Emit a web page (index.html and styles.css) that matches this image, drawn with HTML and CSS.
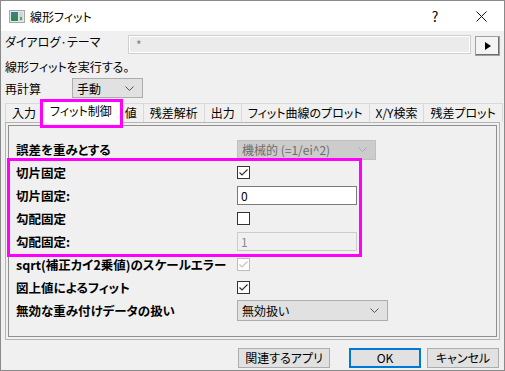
FILE: index.html
```html
<!DOCTYPE html>
<html lang="ja">
<head>
    <meta charset="UTF-8">
    <title>線形フィット</title>
    <link rel="stylesheet" href="styles.css">
</head>
<body>
    <div class="window">
        <div class="titlebar">
            <svg class="app-icon" width="16" height="13" viewBox="0 0 16 13">
                <defs>
                    <linearGradient id="ig" x1="0" y1="0" x2="0" y2="1">
                        <stop offset="0" stop-color="#3d7f86"/>
                        <stop offset="1" stop-color="#2f8a4e"/>
                    </linearGradient>
                </defs>
                <rect x="0.5" y="0.5" width="15" height="12" fill="#e6e8e8" stroke="#a4a8a8"/>
                <rect x="2" y="2" width="7" height="9" fill="url(#ig)"/>
                <rect x="10" y="2" width="4" height="9" fill="#cfd8d4"/>
                <rect x="11" y="7" width="2" height="3" fill="#5aa06a"/>
            </svg>
            <span class="title">線形フィット</span>
            <span class="cap-btn">?</span>
            <span class="cap-btn">
                <svg width="11" height="11" viewBox="0 0 11 11"><path d="M0.5 0.5 L10.5 10.5 M10.5 0.5 L0.5 10.5" stroke="#111" stroke-width="1"/></svg>
            </span>
        </div>
        <div class="body">
            <div class="theme-row">
                <span class="theme-label">ダイアログ·テーマ</span>
                <div class="theme-box">*</div>
                <div class="arrow-btn">
                    <svg width="6" height="8" viewBox="0 0 6 8"><polygon points="0,0 6,4 0,8" fill="#000"/></svg>
                </div>
            </div>
            <div class="desc">線形フィットを実行する。</div>
            <div class="recalc-row">
                <span class="recalc-label">再計算</span>
                <div class="combo recalc-combo">
                    <span>手動</span>
                    <svg class="chev" width="9" height="5" viewBox="0 0 9 5"><polyline points="0.5,0.5 4.5,4.5 8.5,0.5" fill="none" stroke="#555"/></svg>
                </div>
            </div>
            <div class="tabs">
                <div class="tab first">入力</div>
                <div class="tab active">フィット制御</div>
                <div class="tab">値</div>
                <div class="tab">残差解析</div>
                <div class="tab">出力</div>
                <div class="tab">フィット曲線のプロット</div>
                <div class="tab">X/Y検索</div>
                <div class="tab">残差プロット</div>
            </div>
            <div class="panel">
                <div class="page">
                    <div class="row">
                        <span class="lbl">誤差を重みとする</span>
                        <div class="combo combo-off weight-combo">
                            <span>機械的 (=1/ei^2)</span>
                            <svg class="chev" width="9" height="5" viewBox="0 0 9 5"><polyline points="0.5,0.5 4.5,4.5 8.5,0.5" fill="none" stroke="#aaa"/></svg>
                        </div>
                    </div>
                    <div class="marked">
                        <div class="row">
                            <span class="lbl">切片固定</span>
                            <span class="check">
                                <svg width="11" height="11" viewBox="0 0 11 11"><polyline points="1.5,5.5 4,8 9.5,2.5" fill="none" stroke="#333" stroke-width="1.2"/></svg>
                            </span>
                        </div>
                        <div class="row">
                            <span class="lbl">切片固定:</span>
                            <div class="field">0</div>
                        </div>
                        <div class="row">
                            <span class="lbl">勾配固定</span>
                            <span class="check"></span>
                        </div>
                        <div class="row">
                            <span class="lbl">勾配固定:</span>
                            <div class="field field-off">1</div>
                        </div>
                    </div>
                    <div class="row">
                        <span class="lbl">sqrt(補正カイ2乗値)のスケールエラー</span>
                        <span class="check check-off">
                            <svg width="11" height="11" viewBox="0 0 11 11"><polyline points="1.5,5.5 4,8 9.5,2.5" fill="none" stroke="#c4c4c4" stroke-width="1.2"/></svg>
                        </span>
                    </div>
                    <div class="row">
                        <span class="lbl">図上値によるフィット</span>
                        <span class="check">
                            <svg width="11" height="11" viewBox="0 0 11 11"><polyline points="1.5,5.5 4,8 9.5,2.5" fill="none" stroke="#333" stroke-width="1.2"/></svg>
                        </span>
                    </div>
                    <div class="row">
                        <span class="lbl">無効な重み付けデータの扱い</span>
                        <div class="combo invalid-combo">
                            <span>無効扱い</span>
                            <svg class="chev" width="9" height="5" viewBox="0 0 9 5"><polyline points="0.5,0.5 4.5,4.5 8.5,0.5" fill="none" stroke="#555"/></svg>
                        </div>
                    </div>
                </div>
            </div>
            <div class="buttons">
                <div class="btn btn-apps">関連するアプリ</div>
                <div class="btn btn-ok">OK</div>
                <div class="btn btn-cancel">キャンセル</div>
            </div>
        </div>
    </div>
</body>
</html>
```
FILE: styles.css
```css
body {
    margin: 0;
    font-family: "Noto Sans CJK JP", "Noto Sans", sans-serif;
    font-size: 12px;
    font-feature-settings: "palt";
    color: #000;
}
.window {
    width: 505px;
    height: 371px;
    box-sizing: border-box;
    border: 1px solid #8a8a8a;
    background: #f0f0f0;
    display: flex;
    flex-direction: column;
}
.titlebar {
    height: 30px;
    background: #fff;
    display: flex;
    align-items: center;
}
.app-icon {
    margin-left: 8px;
}
.title {
    margin-left: 5px;
    flex: 1;
}
.cap-btn {
    width: 46px;
    height: 30px;
    display: flex;
    align-items: center;
    justify-content: center;
    font-size: 14px;
}
.body {
    flex: 1;
    padding: 4px 4px 0;
    display: flex;
    flex-direction: column;
}
.theme-row {
    display: flex;
    align-items: flex-start;
    height: 21px;
}
.theme-label {
    width: 123px;
    line-height: 14px;
}
.theme-box {
    width: 343px;
    height: 19px;
    box-sizing: border-box;
    border: 1px solid #cfcfcf;
    background: #ebebeb;
    box-shadow: inset 0 0 0 1px #fff;
    padding-left: 7px;
    line-height: 18px;
    color: #808080;
}
.arrow-btn {
    margin: 1px 0 0 4px;
    width: 25px;
    height: 20px;
    box-sizing: border-box;
    border: 1px solid #a0a0a0;
    background: #f4f4f4;
    box-shadow: inset -1px -1px #6d6d6d;
    display: flex;
    align-items: center;
    justify-content: center;
}
.desc {
    margin-top: 1px;
    height: 20px;
    line-height: 20px;
}
.recalc-row {
    display: flex;
    align-items: center;
    margin-top: 1px;
    height: 20px;
}
.recalc-label {
    width: 67px;
}
.combo {
    display: flex;
    align-items: center;
    justify-content: space-between;
    box-sizing: border-box;
    border: 1px solid #adadad;
    background: #e1e1e1;
    padding: 0 8px 0 4px;
}
.recalc-combo {
    width: 71px;
    height: 20px;
}
.combo-off {
    background: #cccccc;
    border-color: #bfbfbf;
    color: #6d6d6d;
}
.weight-combo {
    width: 139px;
    height: 20px;
}
.invalid-combo {
    width: 151px;
    height: 21px;
}
.tabs {
    margin-top: 2px;
    height: 22px;
    display: flex;
    align-items: flex-start;
}
.tab {
    flex: none;
    white-space: nowrap;
    margin-top: 3px;
    height: 19px;
    box-sizing: border-box;
    padding: 0 6px;
    line-height: 18px;
    border: 1px solid #d9d9d9;
    border-bottom: none;
    margin-left: -1px;
    background: #f0f0f0;
}
.tab.first {
    margin-left: 0;
}
.tab.active {
    margin: 0 -2px 0 -2px;
    height: 24px;
    padding: 0 8px;
    line-height: 20px;
    background: #fff;
    position: relative;
    z-index: 1;
}
.tab.active::after {
    content: "";
    position: absolute;
    top: -2px;
    left: -2px;
    right: -3px;
    bottom: -4px;
    border: 3px solid #ff00ff;
}
.panel {
    height: 218px;
    box-sizing: border-box;
    border: 1px solid #b4b4b4;
    padding: 2px;
}
.page {
    height: 100%;
    box-sizing: border-box;
    border: 1px solid #8f8f8f;
    padding: 12px 0 0 7px;
}
.row {
    display: grid;
    grid-template-columns: 221px auto;
    align-items: center;
    height: 23px;
}
.lbl {
    font-size: 12.5px;
    font-weight: 700;
    white-space: nowrap;
}
.marked {
    position: relative;
    width: 341px;
}
.marked::after {
    content: "";
    position: absolute;
    top: -3px;
    left: -9px;
    right: -5px;
    bottom: -4px;
    border: 3px solid #ff00ff;
}
.check {
    width: 13px;
    height: 13px;
    box-sizing: border-box;
    border: 1px solid #333;
    background: #fff;
    display: flex;
    align-items: center;
    justify-content: center;
}
.check-off {
    border-color: #bcbcbc;
}
.field {
    width: 120px;
    height: 19px;
    box-sizing: border-box;
    border: 1px solid #7a7a7a;
    background: #fff;
    padding-left: 3px;
    line-height: 17px;
}
.field-off {
    border-color: #cccccc;
    background: #f0f0f0;
    color: #8a8a8a;
}
.buttons {
    display: flex;
    justify-content: flex-end;
    margin-top: 8px;
    padding-right: 1px;
}
.btn {
    height: 20px;
    box-sizing: border-box;
    border: 1px solid #adadad;
    background: #e1e1e1;
    text-align: center;
    line-height: 18px;
}
.btn-apps {
    width: 92px;
    margin-right: 19px;
}
.btn-ok {
    width: 72px;
    border: 2px solid #0078d7;
    line-height: 16px;
    margin-right: 6px;
}
.btn-cancel {
    width: 72px;
}
```
